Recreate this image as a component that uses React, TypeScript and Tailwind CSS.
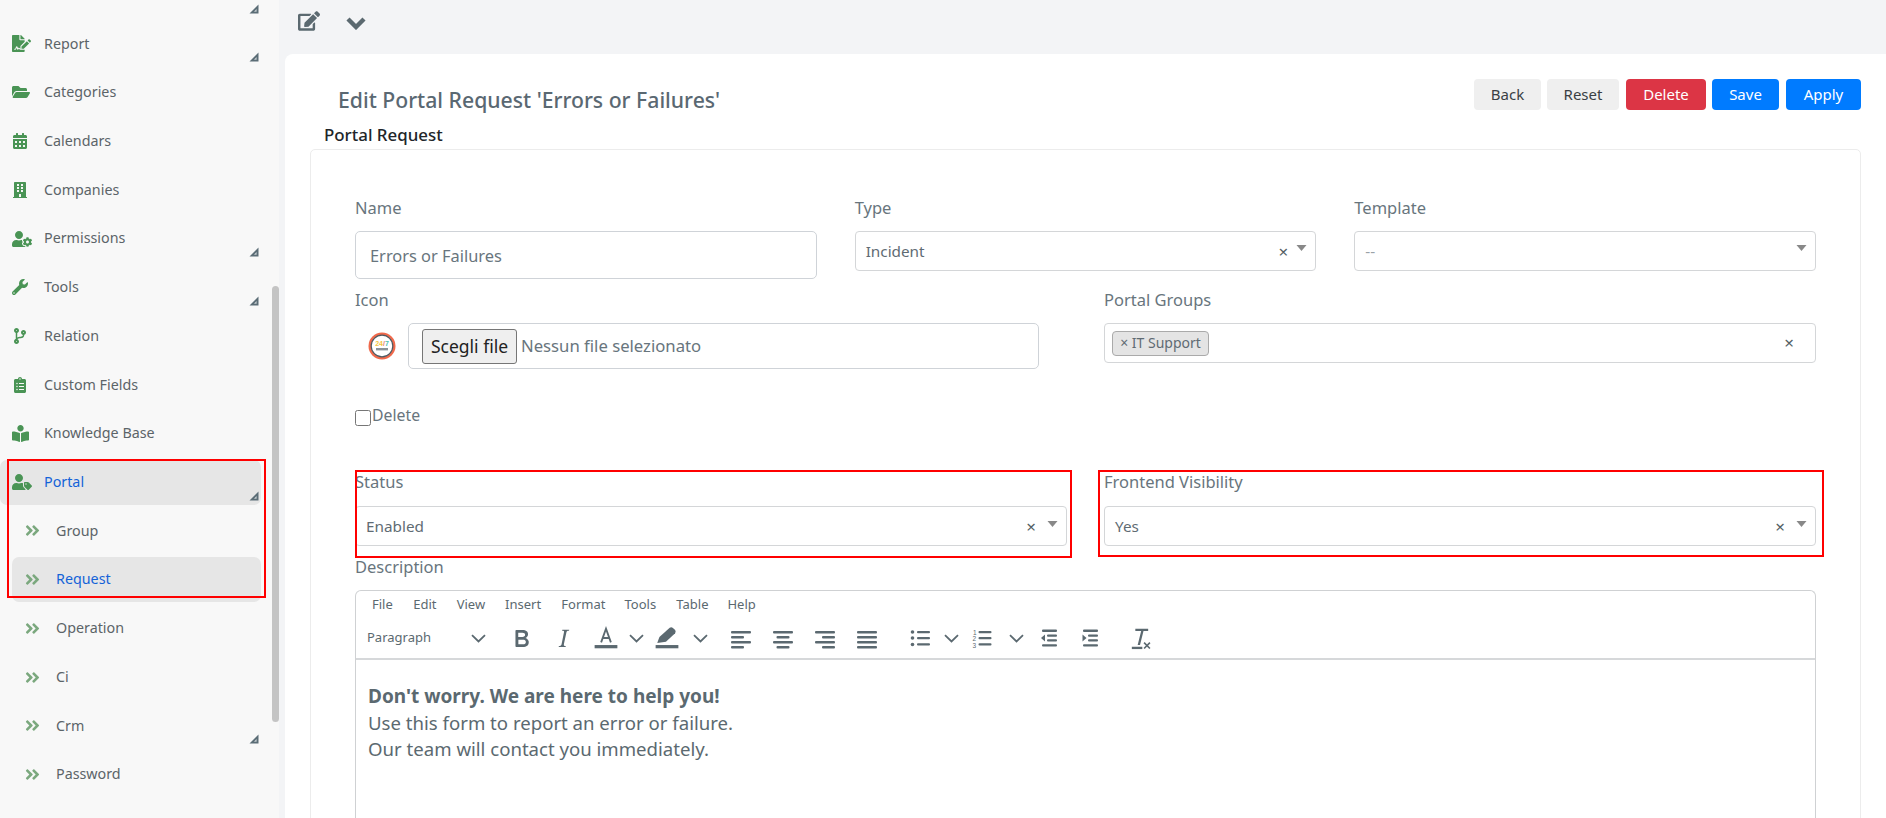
import React from "react";
import {
  FaFileSignature, FaFolderOpen, FaCalendarAlt, FaBuilding, FaUserCog, FaWrench, FaCodeBranch,
  FaClipboardList, FaBookReader, FaUserTag, FaAngleDoubleRight, FaEdit,
} from "react-icons/fa";

const Corner = () => (
  <svg width="10" height="10" viewBox="0 0 10 10" className="ml-auto mr-[2px] mb-[4px] self-end shrink-0">
    <path d="M9.5 0.5 V9.5 H0.5 Z" fill="#5b6d76" />
    <path d="M7.6 5 V7.7 H4.9 Z" fill="#c5ccd0" />
  </svg>
);

type RowProps = { icon?: React.ReactNode; label?: string; arrow?: boolean; active?: boolean; sub?: boolean };
const Row = ({ icon, label, arrow, active, sub }: RowProps) => (
  <div
    className={`flex h-[45px] items-center rounded-[7px] text-[14.3px] ${sub ? "ml-[12px] pl-[12px]" : "pl-[12px]"} ${active ? "bg-[#e6e6e6] text-[#1463d8]" : "text-[#5c6468]"}`}
  >
    <span className={`flex shrink-0 items-center ${sub ? "w-[32px] text-[#7ba87e]" : "w-[32px] text-[#4a9455]"}`}>{icon}</span>
    <span className="-mt-[1px]">{label}</span>
    {arrow && <Corner />}
  </div>
);

const Sidebar = () => (
  <aside className="relative h-full w-[272px] shrink-0 overflow-hidden bg-[#f8f8f8]">
    <nav className="mt-[-27.5px] flex w-[261px] flex-col gap-[3.73px]">
      <Row arrow />
      <Row icon={<FaFileSignature size={19} />} label="Report" arrow />
      <Row icon={<FaFolderOpen size={18} />} label="Categories" />
      <Row icon={<FaCalendarAlt size={16} />} label="Calendars" />
      <Row icon={<FaBuilding size={16} />} label="Companies" />
      <Row icon={<FaUserCog size={20} />} label="Permissions" arrow />
      <Row icon={<FaWrench size={16} />} label="Tools" arrow />
      <Row icon={<FaCodeBranch size={16} />} label="Relation" />
      <Row icon={<FaClipboardList size={16} />} label="Custom Fields" />
      <Row icon={<FaBookReader size={17} />} label="Knowledge Base" />
      <Row icon={<FaUserTag size={20} />} label="Portal" arrow active />
      <Row sub icon={<FaAngleDoubleRight size={17} />} label="Group" />
      <Row sub icon={<FaAngleDoubleRight size={17} />} label="Request" active />
      <Row sub icon={<FaAngleDoubleRight size={17} />} label="Operation" />
      <Row sub icon={<FaAngleDoubleRight size={17} />} label="Ci" />
      <Row sub icon={<FaAngleDoubleRight size={17} />} label="Crm" arrow />
      <Row sub icon={<FaAngleDoubleRight size={17} />} label="Password" />
    </nav>
    <div className="absolute left-[7px] top-[459px] h-[139px] w-[259px] border-2 border-[#ff0000]" />
  </aside>
);

const Btn = ({ label, cls }: { label: string; cls: string }) => (
  <button className={`flex h-[31px] items-center justify-center rounded-[4px] text-[15px] ${cls}`}>{label}</button>
);

const Label = ({ children }: { children: React.ReactNode }) => (
  <div className="mb-[11px] flex h-[24px] items-center text-[16.5px] leading-[24px] text-[#68757d]">{children}</div>
);

const Arrow = ({ low }: { low?: boolean }) => (
  <svg width="11" height="6" viewBox="0 0 11 6" className={`shrink-0 ${low ? "mb-[4px]" : "mb-[7px]"}`}>
    <path d="M0.5 0 H10.5 L5.5 6 Z" fill="#888888" />
  </svg>
);
const Clear = () => <span className="text-[17px] leading-none text-[#555f65]">×</span>;

const Select = ({ value, clear, muted, low }: { value: string; clear?: boolean; muted?: boolean; low?: boolean }) => (
  <div className="flex h-[40px] items-center rounded-[4px] border border-[#d4d6d8] pl-[10px] pr-[8px] text-[15.3px]">
    <span className={`flex-1 ${muted ? "text-[#9aa2a7]" : "text-[#5f6b73]"}`}>{value}</span>
    {clear && <span className={`flex ${low ? "mr-[11px]" : "mr-[8px]"}`}><Clear /></span>}
    <Arrow low={low} />
  </div>
);

const Logo = () => (
  <svg width="28" height="28" viewBox="0 0 28 28" className="shrink-0">
    <circle cx="14" cy="14" r="13.5" fill="#f0694b" />
    <circle cx="14" cy="14" r="10.8" fill="#ffffff" stroke="#4d5a62" strokeWidth="1.2" />
    <text x="14" y="14" textAnchor="middle" fontSize="7" fontWeight="700" fontFamily="Liberation Sans">
      <tspan fill="#f4c542">24</tspan><tspan fill="#e87d6a">/</tspan><tspan fill="#4fc2b0">7</tspan>
    </text>
    <rect x="8" y="16" width="12" height="2.4" fill="#8b9398" />
  </svg>
);

const I = ({ s = 24, children, vb = "0 0 24 24" }: { s?: number; vb?: string; children: React.ReactNode }) => (
  <svg width={s} height={s} viewBox={vb} fill="#5b6970">{children}</svg>
);
const Chev = () => (
  <svg width="15" height="9" viewBox="0 0 15 9" fill="none" stroke="#5b6970" strokeWidth="1.8">
    <path d="M1 1.2 L7.5 7.5 L14 1.2" />
  </svg>
);
const Lines = ({ rows }: { rows: [number, number][] }) => (
  <I s={24}>
    {rows.map(([x, w], i) => (
      <rect key={i} x={x} y={5 + i * 5} width={w} height="2.4" rx="1" />
    ))}
  </I>
);
const T = ({ w, ml = 0, children }: { w: number; ml?: number; children: React.ReactNode }) => (
  <div className="flex h-[36px] shrink-0 items-center justify-center" style={{ width: w, marginLeft: ml }}>
    {children}
  </div>
);

const Toolbar = () => (
  <div className="flex h-[40px] items-center pl-[4px]">
    <div className="flex w-[140px] shrink-0 items-center justify-between pl-[7px] pr-[14px] text-[13px] text-[#5b6970]">
      <span>Paragraph</span>
      <Chev />
    </div>
    <T w={42}>
      <I s={29}><path d="M7.8 19c-.3 0-.5 0-.6-.2l-.2-.5V5.7c0-.2 0-.4.2-.5l.6-.2h5c1.5 0 2.7.3 3.5 1 .7.6 1.1 1.4 1.1 2.5a3 3 0 0 1-.6 1.9c-.4.6-1 1-1.6 1.2.4.1.9.3 1.3.6s.8.7 1 1.2c.4.4.5 1 .5 1.6 0 1.3-.4 2.3-1.3 3-.8.7-2.1 1-3.8 1H7.8zm5-8.3c.6 0 1.2-.1 1.6-.5.4-.3.6-.7.6-1.3 0-1.1-.8-1.7-2.3-1.7H9.3v3.5h3.4zm.5 6c.7 0 1.3-.1 1.7-.4.4-.4.6-.9.6-1.5s-.2-1-.7-1.4c-.4-.3-1-.4-2-.4H9.4v3.8h4z" /></I>
    </T>
    <T w={42}>
      <I s={29}><path d="M16.7 4.7l-.1.9h-.3c-.6 0-1 0-1.4.3-.3.3-.4.6-.5 1.1l-2.1 9.8v.6c0 .5.4.8 1.4.8h.2l-.2.8H8l.2-.8h.2c1.1 0 1.8-.5 2-1.5l2-9.8.1-.5c0-.6-.4-.8-1.4-.8h-.3l.2-.9h5.8z" /></I>
    </T>
    <T w={28} ml={8}>
      <I s={26}>
        <rect x="1.5" y="18.5" width="21" height="3" />
        <path d="M7.5 16 L12 3.5 L16.5 16 M9 12 H15" fill="none" stroke="#5b6970" strokeWidth="1.7" />
      </I>
    </T>
    <T w={32}><Chev /></T>
    <T w={30}>
      <I s={26}>
        <rect x="1.5" y="18.5" width="21" height="3" />
        <path d="M3 16.5 L5 11 L14.5 2.5 Q16 1.5 17.5 2.7 L19.5 4.7 Q20.5 6 19.5 7.5 L11 15.5 Z" />
      </I>
    </T>
    <T w={36}><Chev /></T>
    <T w={40} ml={3}><Lines rows={[[2, 20], [2, 13], [2, 20], [2, 13]]} /></T>
    <T w={40} ml={2}><Lines rows={[[2, 20], [5.5, 13], [2, 20], [5.5, 13]]} /></T>
    <T w={40} ml={2}><Lines rows={[[2, 20], [9, 13], [2, 20], [9, 13]]} /></T>
    <T w={40} ml={2}><Lines rows={[[2, 20], [2, 20], [2, 20], [2, 20]]} /></T>
    <T w={30} ml={19}>
      <I>
        <circle cx="3.5" cy="6" r="1.8" /><circle cx="3.5" cy="12" r="1.8" /><circle cx="3.5" cy="18.5" r="1.8" />
        <rect x="8" y="5" width="13" height="2.2" rx="1" /><rect x="8" y="11" width="13" height="2.2" rx="1" /><rect x="8" y="17.3" width="13" height="2.2" rx="1" />
      </I>
    </T>
    <T w={30}><Chev /></T>
    <T w={34}>
      <I>
        <text x="2" y="8.5" fontSize="6.5" fontFamily="Liberation Sans">1</text>
        <text x="1.5" y="15" fontSize="6.5" fontFamily="Liberation Sans">2</text>
        <text x="1.5" y="21.5" fontSize="6.5" fontFamily="Liberation Sans">3</text>
        <rect x="7.5" y="5" width="13" height="2.2" rx="1" /><rect x="7.5" y="11" width="13" height="2.2" rx="1" /><rect x="7.5" y="17.3" width="13" height="2.2" rx="1" />
      </I>
    </T>
    <T w={30} ml={1}><Chev /></T>
    <T w={36}>
      <I>
        <rect x="5" y="3.5" width="15" height="2.4" rx="1" /><rect x="10" y="8.5" width="10" height="2.2" rx="1" /><rect x="10" y="13.3" width="10" height="2.2" rx="1" /><rect x="5" y="18.2" width="15" height="2.4" rx="1" />
        <path d="M8 8.5 L4 12 L8 15.5 Z" />
      </I>
    </T>
    <T w={36} ml={5}>
      <I>
        <rect x="5" y="3.5" width="15" height="2.4" rx="1" /><rect x="10" y="8.5" width="10" height="2.2" rx="1" /><rect x="10" y="13.3" width="10" height="2.2" rx="1" /><rect x="5" y="18.2" width="15" height="2.4" rx="1" />
        <path d="M4.5 8.5 L8.5 12 L4.5 15.5 Z" />
      </I>
    </T>
    <T w={36} ml={14}>
      <I s={28}>
        <path d="M8 4 H19 V6 H15 L12 18 H10 L13 6 H8 Z" />
        <rect x="5" y="19.5" width="9" height="2" />
        <path d="M15.5 16 L20.5 21 M20.5 16 L15.5 21" fill="none" stroke="#5b6970" strokeWidth="1.4" />
      </I>
    </T>
  </div>
);

const Editor = () => (
  <div className="rounded-t-[6px] border border-b-0 border-[#cfd1d3] h-[260px]">
    <div className="flex h-[27px] items-end pb-[4px] text-[13px] leading-[20px] text-[#5b6970]">
      <span className="ml-[16px]">File</span>
      <span className="ml-[20.4px]">Edit</span>
      <span className="ml-[20.2px]">View</span>
      <span className="ml-[20px]">Insert</span>
      <span className="ml-[20.2px]">Format</span>
      <span className="ml-[19px]">Tools</span>
      <span className="ml-[20.2px]">Table</span>
      <span className="ml-[19px]">Help</span>
    </div>
    <Toolbar />
    <div className="border-t-2 border-[#d6d8da] px-[12px] pt-[23px] text-[18.6px] leading-[26.5px] text-[#5b6970]">
      <p className="text-[19px] font-bold">Don't worry. We are here to help you!</p>
      <p>Use this form to report an error or failure.</p>
      <p>Our team will contact you immediately.</p>
    </div>
  </div>
);

export default function App() {
  return (
    <div className="flex h-[818px] w-[1886px] overflow-hidden bg-[#f3f4f6] font-['Noto_Sans',sans-serif]">
      <Sidebar />
      <div className="h-full w-[7px] shrink-0 bg-[#f8f8f8] pt-[286px]">
        <div className="h-[436px] w-[7px] rounded-[4px] bg-[#c4c4c4]" />
      </div>
      <main className="flex min-w-0 flex-1 flex-col">
        <div className="flex h-[54px] shrink-0 items-start pl-[19px] pt-[10px] text-[#5b6970]">
          <FaEdit size={22} />
          <svg width="20" height="14" viewBox="0 0 20 14" className="ml-[26px] mt-[6px]" fill="none" stroke="#5b6970" strokeWidth="4.4">
            <path d="M2 3 L10 11 L18 3" />
          </svg>
        </div>
        <section className="ml-[6px] flex-1 rounded-tl-[8px] bg-white">
          <div className="flex h-[70px] items-start justify-between pl-[53px] pr-[25px] pt-[25px]">
            <h1 className="text-[21.2px] font-medium leading-[42px] text-[#5a6872]">Edit Portal Request 'Errors or Failures'</h1>
            <div className="flex">
              <Btn label="Back" cls="w-[67px] bg-[#efefef] text-[#3a3f44]" />
              <Btn label="Reset" cls="ml-[6px] w-[72px] bg-[#efefef] text-[#3a3f44]" />
              <Btn label="Delete" cls="ml-[7px] w-[80px] bg-[#dc3545] text-white" />
              <Btn label="Save" cls="ml-[6px] w-[67px] bg-[#007bff] text-white" />
              <Btn label="Apply" cls="ml-[7px] w-[75px] bg-[#007bff] text-white" />
            </div>
          </div>
          <div className="-mt-[1px] h-[26px] pl-[39px] text-[16.9px] font-medium leading-[24px] text-[#212529]">Portal Request</div>
          <div className="mx-[25px] h-[700px] rounded-[5px] border border-[#ececec] px-[44px] pt-[46px]">
            <div className="grid grid-cols-3 gap-x-[38px]">
              <div>
                <Label>Name</Label>
                <div className="flex h-[48px] items-center rounded-[5px] border border-[#cfd3d8] pl-[14px] pt-[2px] text-[16.4px] text-[#68757d]">Errors or Failures</div>
              </div>
              <div>
                <Label>Type</Label>
                <Select value="Incident" clear />
              </div>
              <div>
                <Label>Template</Label>
                <Select value="--" muted />
              </div>
            </div>
            <div className="mt-[9px] grid grid-cols-2 gap-x-[37px]">
              <div>
                <Label>Icon</Label>
                <div className="flex items-start">
                  <div className="ml-[13px] mr-[12px] mt-[9px]"><Logo /></div>
                  <div className="flex h-[46px] w-[631px] items-center rounded-[5px] border border-[#cfd3d8] pl-[13px] text-[16.7px]">
                    <span className="flex h-[35px] w-[95px] items-center justify-center rounded-[3px] border border-[#767676] bg-[#efefef] text-[17.5px] text-[#222]">Scegli file</span>
                    <span className="ml-[4px] text-[#68757d]">Nessun file selezionato</span>
                  </div>
                </div>
              </div>
              <div>
                <Label>Portal Groups</Label>
                <div className="flex h-[40px] items-center rounded-[4px] border border-[#d4d6d8] pl-[7px] pr-[21px]">
                  <span className="flex h-[25px] w-[97px] items-center justify-center rounded-[4px] border border-[#aaaaaa] bg-[#e4e4e4] pb-[1px] text-[14px] text-[#5f6b73]">× IT Support</span>
                  <span className="ml-auto"><Clear /></span>
                </div>
              </div>
            </div>
            <div className="mt-[33px] flex h-[24px] items-center text-[15.8px] text-[#68757d]">
              <input type="checkbox" className="mt-[7px] h-[16px] w-[16px]" readOnly />
              <span className="ml-[1px] mt-[3px]">Delete</span>
            </div>
            <div className="mt-[44px] grid grid-cols-2 gap-x-[37px]">
              <div className="relative">
                <Label>Status</Label>
                <div className="mt-[12px]"><Select value="Enabled" clear low /></div>
                <div className="absolute left-0 top-0 h-[88px] w-[717px] border-2 border-[#ff0000]" />
              </div>
              <div className="relative">
                <Label>Frontend Visibility</Label>
                <div className="mt-[12px]"><Select value="Yes" clear low /></div>
                <div className="absolute -left-[6px] top-0 h-[87px] w-[726px] border-2 border-[#ff0000]" />
              </div>
            </div>
            <div className="mt-[9px]">
              <Label>Description</Label>
              <Editor />
            </div>
          </div>
        </section>
      </main>
    </div>
  );
}
